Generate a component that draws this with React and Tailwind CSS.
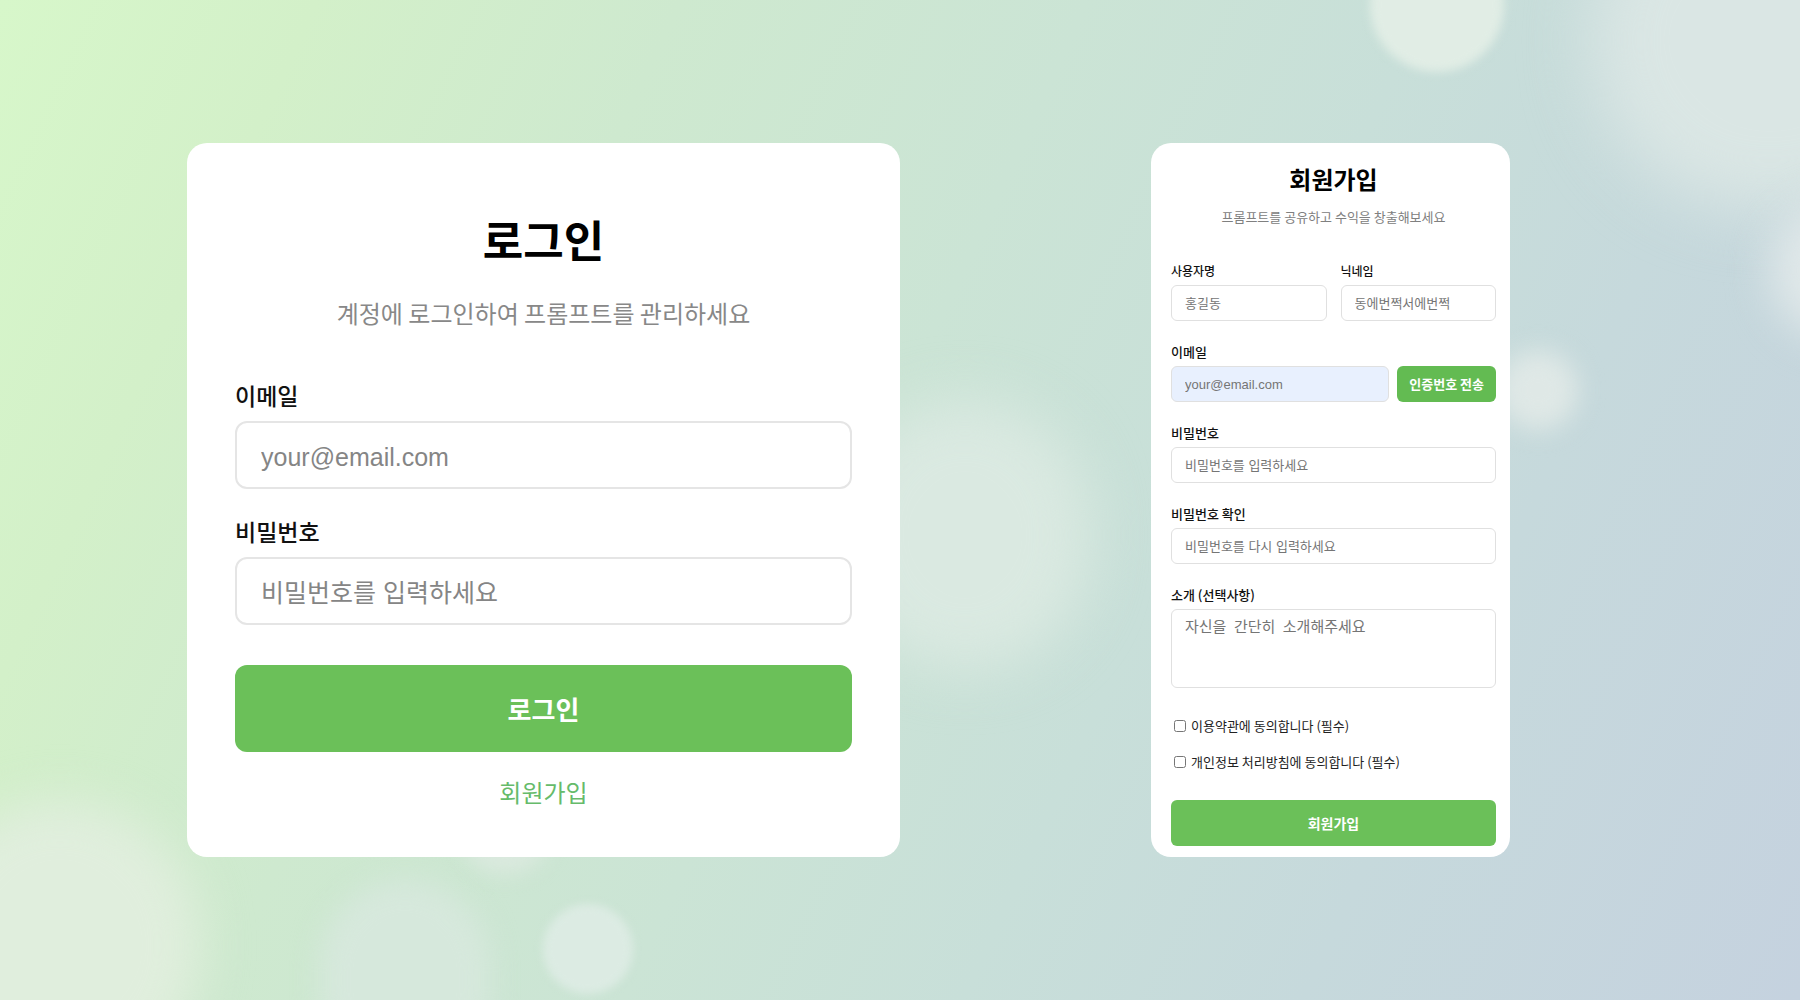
import React, { useState } from 'react';

// Soft light spots floating over the gradient
const spots = [
    'left-[1370px] -top-[62px] w-[134px] h-[134px] bg-[#e1ede5] blur-[5px]',
    'left-[1590px] -top-[130px] w-[360px] h-[340px] bg-[#dae6e4] blur-[32px]',
    'left-[1770px] top-[200px] w-[150px] h-[140px] bg-[#e0e8e9] blur-[20px]',
    'left-[1498px] top-[350px] w-[80px] h-[80px] bg-[#dfe8e6] blur-[12px]',
    'left-[840px] top-[400px] w-[250px] h-[270px] bg-[#dae9e1] blur-[28px]',
    '-left-[80px] top-[800px] w-[280px] h-[290px] bg-[#e0eedd] blur-[24px]',
    'left-[320px] top-[880px] w-[170px] h-[200px] bg-[#d6e8dc] blur-[14px]',
    'left-[543px] top-[904px] w-[90px] h-[90px] bg-[#dcebe3] blur-[4px]',
    'left-[460px] top-[790px] w-[90px] h-[84px] bg-[#dae9de] blur-[10px]',
];

const largeInput = "w-full h-[68px] px-6 pt-1 bg-white border-2 border-[#e5e5e5] rounded-xl text-[25px] font-['Liberation_Sans','Noto_Sans_CJK_KR',sans-serif] placeholder:text-[#858585] focus:outline-none focus:border-[#6bc059]";
const smallInput = "w-full h-9 px-[13px] border border-[#e0e0e0] rounded-md text-[13px] font-['Liberation_Sans','Noto_Sans_CJK_KR',sans-serif] placeholder:text-[#757575] focus:outline-none focus:border-[#6bc059]";

const LoginCard = () => {
    const [form, setForm] = useState({ email: '', password: '' });

    const handleChange = (e) => {
        setForm({ ...form, [e.target.name]: e.target.value });
    };

    return (
        <section className="flex-1 min-w-0 bg-white rounded-[20px] px-12 pt-16 pb-12">
            <h1 className="text-[44px] leading-[64px] font-bold text-center text-black">로그인</h1>
            <p className="mt-6 text-2xl leading-9 text-center text-[#888888]">계정에 로그인하여 프롬프트를 관리하세요</p>

            <form onSubmit={(e) => e.preventDefault()} className="mt-12">
                <div>
                    <label htmlFor="login-email" className="block mb-[10px] text-[23px] leading-8 font-medium text-[#111111]">이메일</label>
                    <input
                        type="email"
                        id="login-email"
                        name="email"
                        value={form.email}
                        onChange={handleChange}
                        placeholder="your@email.com"
                        className={largeInput}
                    />
                </div>
                <div className="mt-[26px]">
                    <label htmlFor="login-password" className="block mb-[10px] text-[23px] leading-8 font-medium text-[#111111]">비밀번호</label>
                    <input
                        type="password"
                        id="login-password"
                        name="password"
                        value={form.password}
                        onChange={handleChange}
                        placeholder="비밀번호를 입력하세요"
                        className={largeInput}
                    />
                </div>
                <button
                    type="submit"
                    className="mt-10 w-full h-[87px] rounded-xl bg-[#6bc059] text-[26px] font-bold text-white"
                >
                    로그인
                </button>
            </form>

            <div className="mt-6 text-center">
                <a href="#signup" className="text-2xl leading-8 text-[#66bb6a]">회원가입</a>
            </div>
        </section>
    );
};

const Field = ({ id, label, labelSize = 'text-[13px]', children }) => (
    <div className="flex-1 min-w-0">
        <label htmlFor={id} className={`block mb-1 leading-5 font-medium text-[#111111] ${labelSize}`}>{label}</label>
        {children}
    </div>
);

const SignupCard = () => {
    const [form, setForm] = useState({
        username: '',
        nickname: '',
        email: '',
        password: '',
        confirm: '',
        intro: '',
    });

    const handleChange = (e) => {
        setForm({ ...form, [e.target.name]: e.target.value });
    };

    return (
        <section id="signup" className="w-full lg:w-[359px] bg-white rounded-[20px] pl-5 pr-[14px] pt-5 pb-[11px]">
            <h2 className="text-2xl leading-8 font-bold text-center text-black">회원가입</h2>
            <p className="mt-3 text-[13px] leading-5 text-center text-[#808080]">프롬프트를 공유하고 수익을 창출해보세요</p>

            <form onSubmit={(e) => e.preventDefault()} className="mt-[34px]">
                <div className="flex flex-col gap-[21px]">
                    <div className="flex gap-[14px]">
                        <Field id="username" label="사용자명" labelSize="text-xs">
                            <input type="text" id="username" name="username" value={form.username} onChange={handleChange} placeholder="홍길동" className={smallInput} />
                        </Field>
                        <Field id="nickname" label="닉네임" labelSize="text-xs">
                            <input type="text" id="nickname" name="nickname" value={form.nickname} onChange={handleChange} placeholder="동에번쩍서에번쩍" className={smallInput} />
                        </Field>
                    </div>

                    <Field id="email" label="이메일">
                        <div className="flex gap-2">
                            <input type="email" id="email" name="email" value={form.email} onChange={handleChange} placeholder="your@email.com" className={`bg-[#e8f0fe] ${smallInput}`} />
                            <button type="button" className="shrink-0 h-9 px-3 rounded-md bg-[#63bb52] text-[13px] font-bold text-white">
                                인증번호 전송
                            </button>
                        </div>
                    </Field>

                    <Field id="password" label="비밀번호">
                        <input type="password" id="password" name="password" value={form.password} onChange={handleChange} placeholder="비밀번호를 입력하세요" className={smallInput} />
                    </Field>

                    <Field id="confirm" label="비밀번호 확인">
                        <input type="password" id="confirm" name="confirm" value={form.confirm} onChange={handleChange} placeholder="비밀번호를 다시 입력하세요" className={smallInput} />
                    </Field>

                    <Field id="intro" label="소개 (선택사항)">
                        <textarea
                            id="intro"
                            name="intro"
                            value={form.intro}
                            onChange={handleChange}
                            placeholder="자신을 간단히 소개해주세요"
                            className="block w-full h-[79px] px-[13px] py-[6px] resize-none border border-[#e0e0e0] rounded-md text-[15px] leading-5 font-light font-['Noto_Sans_Mono_CJK_KR','Noto_Sans_CJK_KR',monospace] placeholder:text-[#757575] focus:outline-none focus:border-[#6bc059]"
                        />
                    </Field>
                </div>

                {/* Agreements */}
                <div className="mt-7 pl-[3px] flex flex-col gap-4">
                    <label className="flex items-center gap-[5px] text-[13px] leading-5 text-[#222222]">
                        <input type="checkbox" className="w-3 h-3" />
                        이용약관에 동의합니다 (필수)
                    </label>
                    <label className="flex items-center gap-[5px] text-[13px] leading-5 text-[#222222]">
                        <input type="checkbox" className="w-3 h-3" />
                        개인정보 처리방침에 동의합니다 (필수)
                    </label>
                </div>

                <button type="submit" className="mt-7 w-full h-[46px] rounded-md bg-[#6bc059] text-sm font-bold text-white">
                    회원가입
                </button>
            </form>
        </section>
    );
};

const App = () => {
    return (
        <div className="relative min-h-screen overflow-hidden flex items-center bg-[linear-gradient(115deg,#d7f7ca_0%,#d3f0c9_14%,#cee9cf_30%,#cbe4d5_48%,#c8dfd9_63%,#c6d9dc_78%,#c5d2df_100%)] font-['Noto_Sans_CJK_KR',sans-serif]">
            {spots.map((spot) => (
                <div key={spot} className={`absolute rounded-full ${spot}`}></div>
            ))}

            <main className="relative w-full flex flex-col lg:flex-row gap-8 lg:gap-[251px] p-6 lg:py-8 lg:pl-[187px] lg:pr-[290px]">
                <LoginCard />
                <SignupCard />
            </main>
        </div>
    );
};

export default App;
